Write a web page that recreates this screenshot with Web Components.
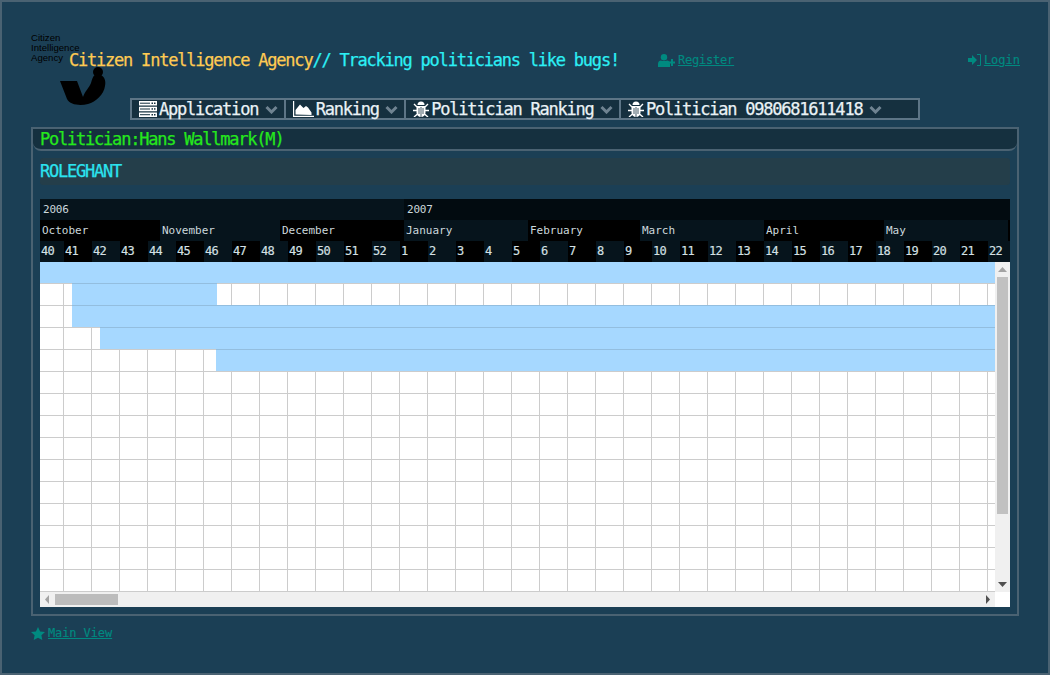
<!DOCTYPE html>
<html>
<head>
<meta charset="utf-8">
<title>Citizen Intelligence Agency</title>
<style>
    html, body { margin: 0; padding: 0; background: #1b3f55; }
</style>
</head>
<body>
<cia-app>
    <cia-header></cia-header>
    <cia-menu></cia-menu>
    <cia-panel title-text="Politician:Hans Wallmark(M)" sub-text="ROLEGHANT">
        <cia-gantt></cia-gantt>
    </cia-panel>
    <cia-footer></cia-footer>
</cia-app>

<script>
const MONO = `"DejaVu Sans Mono", monospace`;

const ICONS = {
    server: `<svg width="18" height="16" viewBox="0 0 18 16"><g fill="#fff"><rect y="0" width="18" height="4.500"/><rect y="5.750" width="18" height="4.500"/><rect y="11.500" width="18" height="4.500"/></g><g fill="#15303f"><rect x="1" y="1.700" width="10" height="1"/><rect x="1" y="7.500" width="10" height="1"/><rect x="1" y="13.200" width="10" height="1"/><rect x="12.500" y="1.500" width="1.500" height="1.500"/><rect x="15" y="1.500" width="1.500" height="1.500"/><rect x="12.500" y="7.200" width="1.500" height="1.500"/><rect x="15" y="7.200" width="1.500" height="1.500"/><rect x="12.500" y="13" width="1.500" height="1.500"/><rect x="15" y="13" width="1.500" height="1.500"/></g></svg>`,
    area: `<svg width="21" height="16" viewBox="0 0 21 16"><path d="M0 0h1.200v14.800H21V16H0z" fill="#fff"/><path d="M2.500 13.500V9L7 3.500l3.500 3.500 2.500-2 2 1.500 3.500 5v2.500z" fill="#fff"/></svg>`,
    bug: `<svg width="16" height="16" viewBox="0 0 16 16"><g fill="#fff"><path d="M4.500 4a3.500 3.500 0 0 1 7 0z"/><path d="M3.500 5h9v6.500c0 2.500-2 4.500-4.500 4.500s-4.500-2-4.500-4.500z"/></g><path d="M8 6v10M6 7v6M10 7v6" stroke="#15303f" stroke-width=".8"/><g stroke="#fff" stroke-width="1.400" fill="none"><path d="M4 6L1 3M12 6l3-3M4 9.500H0M12 9.500h4M4.500 13L1 16M11.500 13l3.500 3"/></g></svg>`,
    chevron: `<svg width="13" height="9" viewBox="0 0 13 9"><path d="M1.500 2L6.500 7l5-5" fill="none" stroke="#6f8391" stroke-width="3"/></svg>`,
    userPlus: `<svg width="17" height="13" viewBox="0 0 17 13"><g fill="#008a80"><circle cx="6" cy="3.200" r="3.200"/><path d="M0 13V10c0-2.500 1.500-3.500 3-3.500 1 .8 5 .8 6 0 1.500 0 3 1 3 3.500v3z"/><path d="M13 5h2v2.500h2v2h-2V12h-2V9.500h-2.200v-2H13z"/></g></svg>`,
    signIn: `<svg width="13" height="12" viewBox="0 0 13 12"><g fill="#008a80"><path d="M0 4h4V1l5 5-5 5V8H0z"/><path d="M9 0h3.200c.4 0 .8.400.8.800v10.400c0 .4-.4.800-.8.800H9v-1h3V1H9z"/></g></svg>`,
    star: `<svg width="14" height="13" viewBox="0 0 14 13"><path d="M7 0l2.100 4.400 4.900.6-3.600 3.300.9 4.700L7 10.700 2.700 13l.9-4.700L0 5l4.900-.6z" fill="#008a80"/></svg>`
};

class CiaApp extends HTMLElement {
    constructor() {
        super();
        this.attachShadow({ mode: "open" }).innerHTML = `
        <style>
            :host {
                display: flex;
                flex-direction: column;
                box-sizing: border-box;
                width: 1050px;
                height: 675px;
                overflow: hidden;
                border: 2px solid #4a6272;
                padding: 0 29px;
                background: #1b3f55;
                font-family: ${MONO};
            }
        </style>
        <slot></slot>`;
    }
}

class CiaHeader extends HTMLElement {
    constructor() {
        super();
        this.attachShadow({ mode: "open" }).innerHTML = `
        <style>
            :host {
                display: flex;
                align-items: center;
                position: relative;
                box-sizing: border-box;
                height: 96px;
                padding: 40px 0 20px 38px;
            }
            h1 { margin: 0; font-weight: normal; font-size: 17px; letter-spacing: -1.22px; white-space: nowrap; color: #2cf0f5; -webkit-text-stroke: 0.25px currentColor; }
            h1 b { font-weight: normal; color: #ffcb52; }
            a { color: #008a80; text-decoration: underline; font-size: 12px; letter-spacing: -0.2px; margin-left: 3px; -webkit-text-stroke: 0.15px currentColor; }
            .reg { display: flex; align-items: center; margin-left: 39px; }
            .log { display: flex; align-items: center; margin-left: auto; margin-right: -1px; }
            .log a { letter-spacing: 0; }
            .logo { position: absolute; left: 0; top: 31px; width: 76px; height: 76px; color: #000;
                font: 9.6px/10px "Liberation Sans", Arial, sans-serif; }
            .logo svg { position: absolute; left: 29px; top: 33px; }
        </style>
        <div class="logo">Citizen<br>Intelligence<br>Agency
            <svg width="48" height="40" viewBox="0 0 48 40"><path d="M0 15L17 15 23 31C25 25 29 22 31 17 32 13 33 10 35 9L41 9C45 11 46 16 45 20 44 28 36 36 28 38 20 40 10 39 7 33z" fill="#000"/><circle cx="38" cy="6" r="5" fill="#000"/></svg>
        </div>
        <h1><b>Citizen Intelligence Agency</b>// Tracking politicians like bugs!</h1>
        <div class="reg">${ICONS.userPlus}<a>Register</a></div>
        <div class="log">${ICONS.signIn}<a>Login</a></div>`;
    }
}

class CiaMenu extends HTMLElement {
    constructor() {
        super();
        const items = [
            ["server", "Application"],
            ["area", "Ranking"],
            ["bug", "Politician Ranking"],
            ["bug", "Politician 0980681611418"]
        ];
        this.attachShadow({ mode: "open" }).innerHTML = `
        <style>
            :host {
                display: flex;
                box-sizing: border-box;
                width: 790px;
                height: 22px;
                margin-left: 99px;
                border: 2px solid #5d7586;
                background: #15303f;
                color: #eaf2f6;
                font-size: 17px;
                letter-spacing: -1.22px;
                -webkit-text-stroke: 0.25px currentColor;
            }
            .item { display: flex; align-items: center; padding: 0 6px 0 7px; white-space: nowrap; }
            .item + .item { border-left: 2px solid #5d7586; }
            .item:last-child { flex: 1; }
            .label { margin: 0 6.5px 0 2px; }
            svg { flex: none; }
        </style>
        ${items.map(([icon, label]) => `
            <div class="item">${ICONS[icon]}<span class="label">${label}</span>${ICONS.chevron}</div>`).join("")}`;
    }
}

class CiaPanel extends HTMLElement {
    constructor() {
        super();
        this.attachShadow({ mode: "open" }).innerHTML = `
        <style>
            :host {
                display: block;
                box-sizing: border-box;
                height: 489px;
                margin-top: 7px;
                border: 2px solid #4a6272;
            }
            .title {
                box-sizing: border-box;
                height: 22px;
                padding-left: 7px;
                border-bottom: 2px solid #4a6272;
                border-radius: 0 0 8px 8px;
                background: #15303f;
                color: #25e81c;
                font-size: 17px;
                line-height: 21px;
                letter-spacing: -1.22px;
                -webkit-text-stroke: 0.25px currentColor;
            }
            .body { padding: 7px 7px 0; }
            .sub {
                height: 27px;
                margin-bottom: 14px;
                border-radius: 3px;
                background: #243e4a;
                color: #2be4f0;
                font-size: 17px;
                line-height: 27px;
                letter-spacing: -1.22px;
                -webkit-text-stroke: 0.25px currentColor;
            }
        </style>
        <div class="title">${this.getAttribute("title-text")}</div>
        <div class="body">
            <div class="sub">${this.getAttribute("sub-text")}</div>
            <slot></slot>
        </div>`;
    }
}

class CiaGantt extends HTMLElement {
    constructor() {
        super();
        const years = [["2006", 364, 0], ["2007", 606, 1]];
        const months = [
            ["October", 120], ["November", 120], ["December", 124], ["January", 124],
            ["February", 112], ["March", 124], ["April", 120], ["May", 124], ["", 2]
        ];
        const weeks = [];
        for (let w = 40; w <= 52; w++) weeks.push(w);
        for (let w = 1; w <= 22; w++) weeks.push(w);
        const bars = [[0, 955], [32, 145], [32, 923], [60, 895], [176, 779]];
        const rows = [];
        for (let i = 0; i < 15; i++) {
            const b = bars[i];
            rows.push(`<div class="row">${b ? `<div class="bar" style="margin-left:${b[0]}px;width:${b[1]}px"></div>` : ""}</div>`);
        }
        this.attachShadow({ mode: "open" }).innerHTML = `
        <style>
            :host {
                display: block;
                width: 970px;
                height: 408px;
                overflow: hidden;
                background: #fff;
                color: #ccd8dc;
                font-size: 11px;
            }
            .hrow { display: flex; height: 21px; line-height: 21px; overflow: hidden; white-space: nowrap; }
            .hrow > div { flex: none; box-sizing: border-box; overflow: hidden; }
            .y0 { background: #06141c; padding-left: 3px; letter-spacing: -0.2px; }
            .y1 { background: #020b10; padding-left: 3px; letter-spacing: -0.2px; }
            .m { padding-left: 2px; }
            .m:nth-child(odd) { background: #000; }
            .m:nth-child(even) { background: #06141c; }
            .w { width: 28px; padding-left: 1px; font-size: 12px; letter-spacing: -0.6px; color: #d5e0e5; -webkit-text-stroke: 0.15px currentColor; }
            .w:first-child { width: 24px; }
            .w:nth-child(odd) { background: #06141c; }
            .w:nth-child(even) { background: #000; }
            .main { display: grid; grid-template-columns: 955px 15px; grid-template-rows: 330px 15px; }
            .grid {
                overflow: hidden;
                background-image: repeating-linear-gradient(90deg, #ccc 0 1px, transparent 1px 28px);
                background-position: 23px 0;
                background-repeat: no-repeat;
            }
            .row { display: flow-root; box-sizing: border-box; height: 22px; border-bottom: 1px solid #ccc; }
            .bar { height: 22px; margin-top: -1px; box-sizing: border-box; background: #a6d8ff; border-top: 1px solid #93bedf; position: relative; }
            .row:first-child .bar { border-top: 0; height: 21px; margin-top: 0; }
            .sb { background: #f0f0f0; display: flex; align-items: center; }
            .v { flex-direction: column; padding-top: 5px; box-sizing: border-box; }
            .v .thumb { width: 11px; height: 237px; margin-top: 5px; background: #c1c1c1; flex: none; }
            .v .end { margin-top: auto; margin-bottom: 5px; }
            .h { padding-left: 5px; box-sizing: border-box; }
            .h .thumb { width: 63px; height: 11px; margin-left: 6px; background: #bcbcbc; flex: none; }
            .h .end { margin-left: auto; margin-right: 5px; }
            .corner { background: #fff; }
            svg { display: block; flex: none; }
        </style>
        <div class="hrow">${years.map(y => `<div class="y${y[2]}" style="width:${y[1]}px">${y[0]}</div>`).join("")}</div>
        <div class="hrow">${months.map(m => `<div class="m" style="width:${m[1]}px">${m[0]}</div>`).join("")}</div>
        <div class="hrow">${weeks.map(w => `<div class="w">${w}</div>`).join("")}</div>
        <div class="main">
            <div class="grid">${rows.join("")}</div>
            <div class="sb v">
                <svg width="9" height="5" viewBox="0 0 9 5"><path d="M4.500 0L9 5H0z" fill="#a3a3a3"/></svg>
                <div class="thumb"></div>
                <svg class="end" width="9" height="5" viewBox="0 0 9 5"><path d="M0 0h9L4.500 5z" fill="#505050"/></svg>
            </div>
            <div class="sb h">
                <svg width="4" height="9" viewBox="0 0 4 9"><path d="M4 0v9L0 4.500z" fill="#a3a3a3"/></svg>
                <div class="thumb"></div>
                <svg class="end" width="4" height="9" viewBox="0 0 4 9"><path d="M0 0l4 4.500L0 9z" fill="#505050"/></svg>
            </div>
            <div class="corner"></div>
        </div>`;
    }
}

class CiaFooter extends HTMLElement {
    constructor() {
        super();
        this.attachShadow({ mode: "open" }).innerHTML = `
        <style>
            :host { display: flex; align-items: center; margin-top: 10px; }
            a { margin-left: 3px; color: #008a80; font-size: 12px; letter-spacing: -0.1px; text-decoration: underline; -webkit-text-stroke: 0.15px currentColor; }
        </style>
        ${ICONS.star}<a>Main View</a>`;
    }
}

customElements.define("cia-app", CiaApp);
customElements.define("cia-header", CiaHeader);
customElements.define("cia-menu", CiaMenu);
customElements.define("cia-panel", CiaPanel);
customElements.define("cia-gantt", CiaGantt);
customElements.define("cia-footer", CiaFooter);
</script>
</body>
</html>
